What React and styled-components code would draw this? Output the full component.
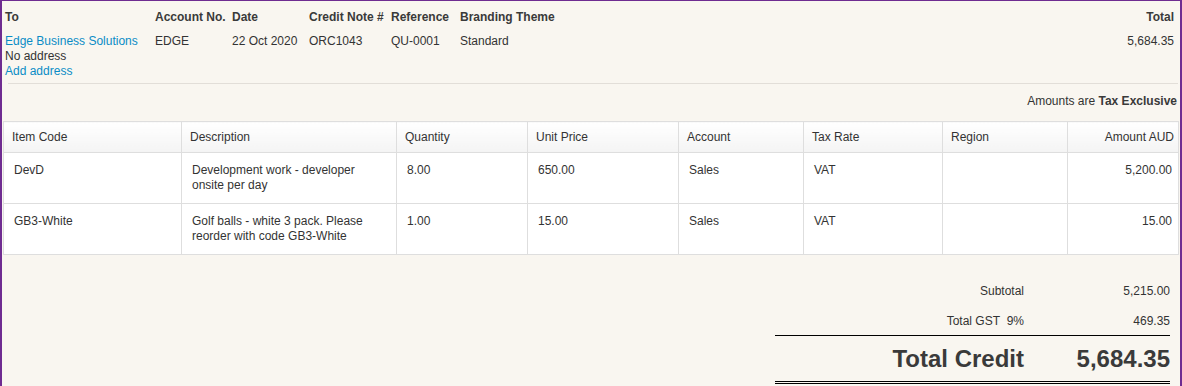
import styled, { createGlobalStyle } from "styled-components"

const GlobalStyle = createGlobalStyle`
body{
    margin: 0;
    background: #f9f6f0;
    font-family: "Liberation Sans", Arial, sans-serif;
    font-size: 12px;
    color: #333;
}
`

const Frame = styled.div`
box-sizing: border-box;
width: 1182px;
height: 386px;
border-left: 2px solid #6f2c91;
border-right: 2px solid #6f2c91;
border-top: 1px solid #6f2c91;
background: #f9f6f0;
overflow: hidden;
`

const Details = styled.div`
display: grid;
grid-template-columns: 150px 77px 77px 82px 69px 1fr auto;
padding: 9px 6px 4px 3px;
line-height: 15px;
`

const Label = styled.div`
font-weight: bold;
color: #3a3a3a;
text-align: ${p => p.$right ? "right" : "left"};
margin-bottom: 9px;
`

const Value = styled.div`
text-align: ${p => p.$right ? "right" : "left"};
`

const Link = styled.a`
display: block;
color: #0a8cc6;
text-decoration: none;
`

const Separator = styled.hr`
border: 0;
border-top: 1px solid #e2ded8;
margin: 0 2px 0 6px;
`

const TaxNote = styled.div`
text-align: right;
line-height: 15px;
padding: 10px 3px 0 0;
margin-bottom: 12px;
b{
    color: #3a3a3a;
}
`

const Table = styled.table`
border-collapse: collapse;
margin: 0 1px;
width: 1176px;
table-layout: fixed;
background: #fff;
line-height: 15px;
`

const Th = styled.th`
font-weight: normal;
text-align: ${p => p.$right ? "right" : "left"};
padding: 8px ${p => p.$right ? "4px" : "7px"} 7px 8px;
border: 1px solid #dedede;
background: linear-gradient(#ffffff, #f4f4f4);
color: #333;
`

const Td = styled.td`
vertical-align: top;
text-align: ${p => p.$right ? "right" : "left"};
padding: 10px ${p => p.$right ? "6px" : "8px"} 10px 10px;
border: 1px solid #dedede;
height: 30px;
color: #333;
`

const Summary = styled.div`
width: 395px;
margin: 21px 0 0 773px;
`

const SumRow = styled.div`
display: grid;
grid-template-columns: 249px 146px;
text-align: right;
line-height: 15px;
padding: ${p => p.$last ? "8px 0 6px" : "8px 0 7px"};
border-bottom: ${p => p.$last ? "1px solid #000" : "none"};
`

const TotalRow = styled.div`
display: grid;
grid-template-columns: 249px 146px;
text-align: right;
font-size: 24px;
font-weight: bold;
line-height: 28px;
color: #3a3a3a;
padding: 9px 0 8px;
border-bottom: 3px double #000;
`

const columns = [
    { name: "Item Code", w: 178 },
    { name: "Description", w: 215 },
    { name: "Quantity", w: 131 },
    { name: "Unit Price", w: 151 },
    { name: "Account", w: 125 },
    { name: "Tax Rate", w: 139 },
    { name: "Region", w: 125 },
    { name: "Amount AUD", w: 111, right: true },
]

const lines = [
    ["DevD", "Development work - developer onsite per day", "8.00", "650.00", "Sales", "VAT", "", "5,200.00"],
    ["GB3-White", "Golf balls - white 3 pack. Please reorder with code GB3-White", "1.00", "15.00", "Sales", "VAT", "", "15.00"],
]

export default function App(){
    return (
        <>
            <GlobalStyle/>
            <Frame>
                <Details>
                    <Label>To</Label>
                    <Label>Account No.</Label>
                    <Label>Date</Label>
                    <Label>Credit Note #</Label>
                    <Label>Reference</Label>
                    <Label>Branding Theme</Label>
                    <Label $right>Total</Label>

                    <Value>
                        <Link href="#">Edge Business Solutions</Link>
                        No address
                        <Link href="#">Add address</Link>
                    </Value>
                    <Value>EDGE</Value>
                    <Value>22 Oct 2020</Value>
                    <Value>ORC1043</Value>
                    <Value>QU-0001</Value>
                    <Value>Standard</Value>
                    <Value $right>5,684.35</Value>
                </Details>
                <Separator/>

                <TaxNote>Amounts are <b>Tax Exclusive</b></TaxNote>

                <Table>
                    <colgroup>
                        {columns.map(c => <col key={c.name} style={{ width: c.w }}/>)}
                    </colgroup>
                    <thead>
                        <tr>
                            {columns.map(c => <Th key={c.name} $right={c.right}>{c.name}</Th>)}
                        </tr>
                    </thead>
                    <tbody>
                        {lines.map(line => (
                            <tr key={line[0]}>
                                {line.map((cell, i) => (
                                    <Td key={i} $right={columns[i].right}>{cell}</Td>
                                ))}
                            </tr>
                        ))}
                    </tbody>
                </Table>

                <Summary>
                    <SumRow>
                        <span>Subtotal</span>
                        <span>5,215.00</span>
                    </SumRow>
                    <SumRow $last>
                        <span>Total GST&nbsp; 9%</span>
                        <span>469.35</span>
                    </SumRow>
                    <TotalRow>
                        <span>Total Credit</span>
                        <span>5,684.35</span>
                    </TotalRow>
                </Summary>
            </Frame>
        </>
    )
}
